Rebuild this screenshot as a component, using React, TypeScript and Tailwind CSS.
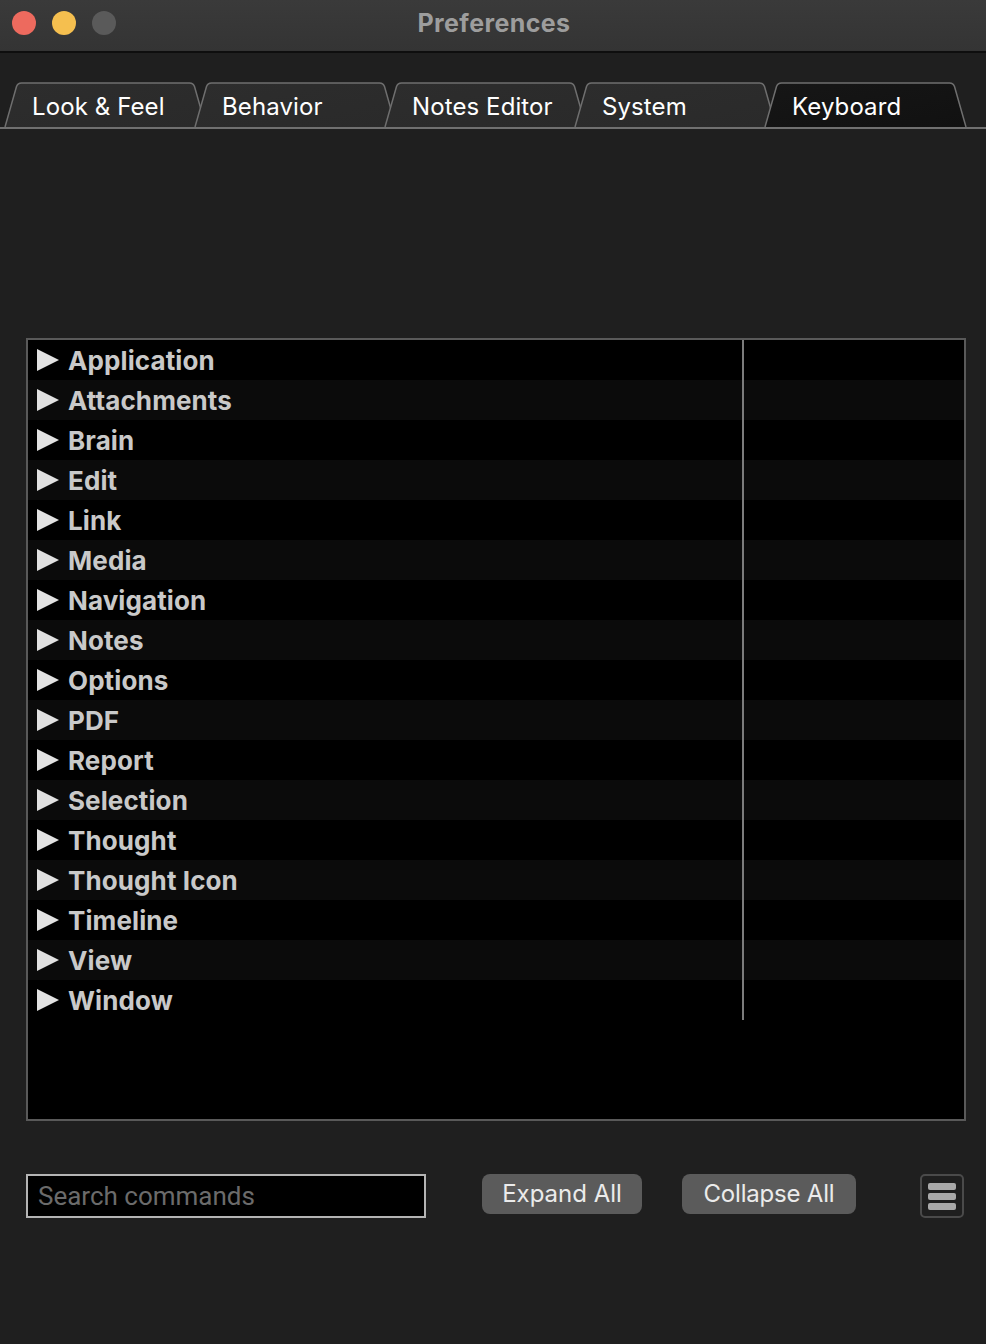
import React from "react";

const tabs = ["Look & Feel", "Behavior", "Notes Editor", "System", "Keyboard"];
const rows = [
  "Application",
  "Attachments",
  "Brain",
  "Edit",
  "Link",
  "Media",
  "Navigation",
  "Notes",
  "Options",
  "PDF",
  "Report",
  "Selection",
  "Thought",
  "Thought Icon",
  "Timeline",
  "View",
  "Window",
];

function Tab({ label, active }: { label: string; active: boolean }) {
  return (
    <div className="relative w-[203px] h-[45px] -mr-[13px] shrink-0">
      <svg className="absolute inset-0" width="203" height="45" viewBox="0 0 203 45">
        <defs>
          <linearGradient id={active ? "ga" : "gi"} x1="0" y1="0" x2="1" y2="1">
            <stop offset="0" stopColor={active ? "#161616" : "#2d2d2d"} />
            <stop offset="1" stopColor={active ? "#111111" : "#2a2a2a"} />
          </linearGradient>
        </defs>
        <path
          d="M1 45 L12.5 4.5 Q13.8 1 17.5 1 L185.5 1 Q189.2 1 190.5 4.5 L202 45"
          fill={`url(#${active ? "ga" : "gi"})`}
          stroke="#6f6f6f"
          strokeWidth="1.5"
        />
      </svg>
      <span className="relative block pl-[28px] leading-[50px] text-[24px] text-white font-['Inter'] tracking-[0.1px]">
        {label}
      </span>
    </div>
  );
}

export default function App() {
  return (
    <div className="w-[986px] h-[1344px] bg-[#1f1f1f] flex flex-col font-['Inter',sans-serif] overflow-hidden">
      {/* Title bar */}
      <div className="h-[53px] bg-gradient-to-b from-[#3a3a3a] to-[#343434] border-b-2 border-[#0e0e0e] grid grid-cols-[1fr_auto_1fr] items-start shrink-0">
        <div className="flex items-center gap-[16px] pl-[12px] pt-[11px]">
          <div className="w-[24px] h-[24px] rounded-full bg-[#ed6a5e]" />
          <div className="w-[24px] h-[24px] rounded-full bg-[#f5bf4f]" />
          <div className="w-[24px] h-[24px] rounded-full bg-[#5a5a5a]" />
        </div>
        <div className="text-[25px] font-bold text-[#9d9d9d] tracking-[0.4px] leading-[46px] pl-[2px]">Preferences</div>
        <div />
      </div>

      {/* Tabs */}
      <div className="mt-[29px] flex pl-[4px] border-b-2 border-[#707070] shrink-0">
        {tabs.map((t) => (
          <Tab key={t} label={t} active={t === "Keyboard"} />
        ))}
      </div>

      {/* Table */}
      <div className="mt-[209px] ml-[26px] w-[940px] h-[783px] border-2 border-[#595959] bg-black shrink-0">
        {rows.map((r, i) => (
          <div key={r} className={`h-[40px] flex ${i % 2 === 1 ? "bg-[#0b0b0b]" : "bg-black"}`}>
            <div className="w-[716px] border-r-2 border-[#7c7c7c] flex items-center pl-[9px]">
              <svg width="22" height="22" viewBox="0 0 22 22" className="shrink-0">
                <polygon points="0,0 22,11 0,22" fill="#e2e2e2" />
              </svg>
              <span className="ml-[9px] mt-[2px] text-[26px] font-bold text-[#c9c9c9] leading-none tracking-[0.1px]">{r}</span>
            </div>
          </div>
        ))}
      </div>

      {/* Bottom controls */}
      <div className="mt-[53px] flex items-start ml-[26px] shrink-0">
        <div className="w-[400px] h-[44px] border-2 border-[#b4b4b4] bg-black flex items-center pl-[10px]">
          <span className="text-[26px] text-[#6b6b6b] font-['Roboto']">Search commands</span>
        </div>
        <button className="ml-[56px] w-[160px] h-[40px] rounded-[8px] bg-[#5b5b5b] text-[24px] text-[#ebebeb] flex items-center justify-center">
          Expand All
        </button>
        <button className="ml-[40px] w-[174px] h-[40px] rounded-[8px] bg-[#5b5b5b] text-[24px] text-[#ebebeb] flex items-center justify-center tracking-[-0.2px]">
          Collapse All
        </button>
        <div className="ml-[64px] w-[44px] h-[44px] rounded-[5px] border-2 border-[#4a4a4a] flex flex-col items-center justify-center gap-[3px]">
          <div className="w-[28px] h-[7px] rounded-[2px] bg-[#a9a9a9]" />
          <div className="w-[28px] h-[7px] rounded-[2px] bg-[#a9a9a9]" />
          <div className="w-[28px] h-[7px] rounded-[2px] bg-[#a9a9a9]" />
        </div>
      </div>
    </div>
  );
}
